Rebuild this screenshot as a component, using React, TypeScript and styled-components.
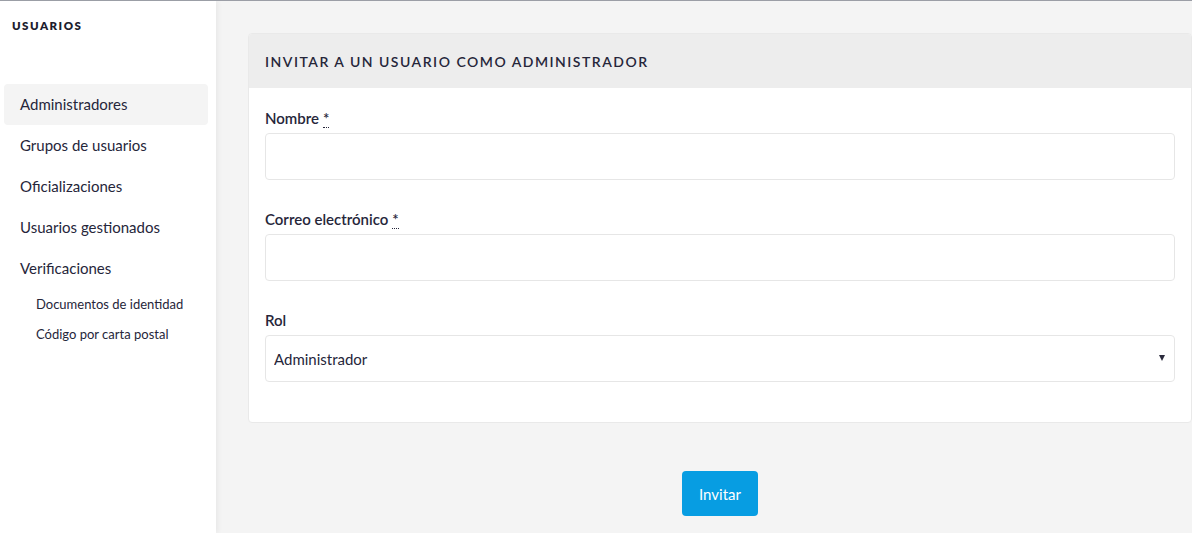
import React from "react";
import styled, { createGlobalStyle } from "styled-components";

const Global = createGlobalStyle`
  html, body { margin: 0; padding: 0; }
  body {
    font-family: "Source Sans Pro", Lato, "Liberation Sans", sans-serif;
    color: #26263a;
    background: #f4f4f4;
  }
  * { box-sizing: border-box; }
`;

const Page = styled.div`
  display: flex;
  height: 533px;
  border-top: 1px solid #9b9ea6;
  overflow: hidden;
`;

const Sidebar = styled.aside`
  width: 216px;
  flex: none;
  background: #fff;
  box-shadow: 2px 0 5px rgba(0, 0, 0, 0.05);
  position: relative;
  z-index: 1;
  padding-top: 18px;
`;

const SideTitle = styled.h2`
  margin: 0 0 51px 12px;
  font-size: 11.5px;
  font-weight: 800;
  letter-spacing: 1.5px;
  line-height: 14px;
  color: #1d1d2e;
`;

const NavList = styled.nav`
  display: flex;
  flex-direction: column;
`;

const NavItem = styled.a<{ $active?: boolean }>`
  display: flex;
  align-items: center;
  height: 41px;
  margin: 0 8px 0 4px;
  padding-left: 16px;
  padding-bottom: 1px;
  border-radius: 4px;
  font-size: 15px;
  color: #26263a;
  background: ${(p) => (p.$active ? "#f4f4f4" : "transparent")};
  text-decoration: none;
`;

const SubItem = styled.a`
  display: flex;
  align-items: center;
  height: 30px;
  padding-left: 36px;
  padding-bottom: 1px;
  font-size: 13px;
  color: #26263a;
  text-decoration: none;
`;

const Main = styled.main`
  flex: 1;
  padding: 32px 0 0 32px;
  display: flex;
  flex-direction: column;
`;

const Card = styled.section`
  background: #fff;
  border: 1px solid #e9e9e9;
  border-radius: 4px;
  overflow: hidden;
`;

const CardHeader = styled.header`
  height: 54px;
  display: flex;
  align-items: center;
  padding-left: 16px;
  background: #ededed;
`;

const CardTitle = styled.h1`
  margin: 0;
  font-size: 14px;
  font-weight: 600;
  letter-spacing: 1.5px;
  text-transform: uppercase;
  color: #26263a;
`;

const CardBody = styled.div`
  padding: 19px 16px 12px 16px;
  display: flex;
  flex-direction: column;
`;

const Field = styled.div`
  display: flex;
  flex-direction: column;
  gap: 4px;
  margin-bottom: 28px;
`;

const Label = styled.label`
  font-size: 15px;
  font-weight: 600;
  line-height: 22px;
  color: #26263a;
`;

const Req = styled.abbr`
  text-decoration: none;
  border-bottom: 1px dotted #26263a;
  margin-left: 4px;
`;

const Input = styled.input`
  height: 47px;
  width: 100%;
  border: 1px solid #e6e6e6;
  border-radius: 4px;
  background: #fff;
  padding: 0 8px;
  font: inherit;
  font-size: 15px;
  outline: none;
`;

const SelectWrap = styled.div`
  position: relative;
  &::after {
    content: "";
    position: absolute;
    right: 10px;
    top: 20px;
    border-left: 3.5px solid transparent;
    border-right: 3.5px solid transparent;
    border-top: 6px solid #2b2b3d;
    pointer-events: none;
  }
`;

const Select = styled.select`
  appearance: none;
  -webkit-appearance: none;
  height: 47px;
  width: 100%;
  border: 1px solid #e6e6e6;
  border-radius: 4px;
  background: #fff;
  padding: 0 8px;
  font-family: inherit;
  font-size: 15px;
  color: #26263a;
  outline: none;
`;

const Actions = styled.div`
  display: flex;
  justify-content: center;
  padding-top: 48px;
`;

const Button = styled.button`
  height: 45px;
  padding: 0 17px;
  border: none;
  border-radius: 4px;
  background: #079de2;
  color: #fff;
  font-family: inherit;
  font-size: 15px;
  cursor: pointer;
`;

export default function App() {
  return (
    <>
      <Global />
      <Page>
        <Sidebar>
          <SideTitle>USUARIOS</SideTitle>
          <NavList>
            <NavItem $active>Administradores</NavItem>
            <NavItem>Grupos de usuarios</NavItem>
            <NavItem>Oficializaciones</NavItem>
            <NavItem>Usuarios gestionados</NavItem>
            <NavItem>Verificaciones</NavItem>
            <SubItem>Documentos de identidad</SubItem>
            <SubItem>Código por carta postal</SubItem>
          </NavList>
        </Sidebar>
        <Main>
          <Card>
            <CardHeader>
              <CardTitle>Invitar a un usuario como administrador</CardTitle>
            </CardHeader>
            <CardBody>
              <Field>
                <Label>
                  Nombre<Req title="obligatorio">*</Req>
                </Label>
                <Input type="text" />
              </Field>
              <Field>
                <Label>
                  Correo electrónico<Req title="obligatorio">*</Req>
                </Label>
                <Input type="email" />
              </Field>
              <Field>
                <Label>Rol</Label>
                <SelectWrap>
                  <Select defaultValue="admin">
                    <option value="admin">Administrador</option>
                  </Select>
                </SelectWrap>
              </Field>
            </CardBody>
          </Card>
          <Actions>
            <Button>Invitar</Button>
          </Actions>
        </Main>
      </Page>
    </>
  );
}
